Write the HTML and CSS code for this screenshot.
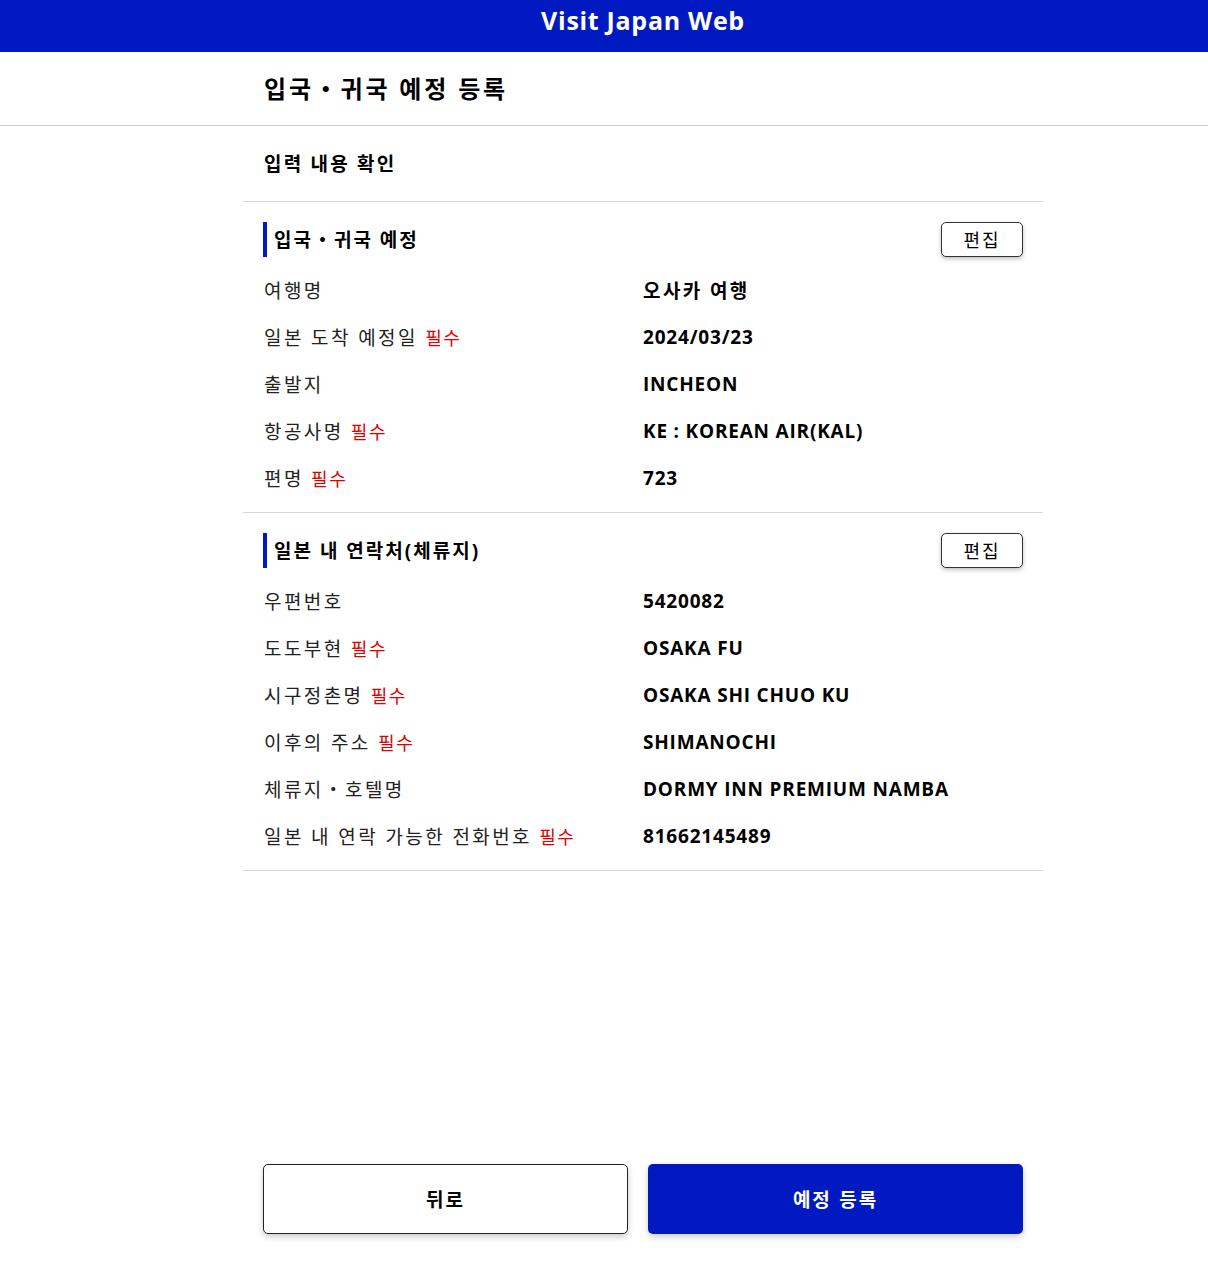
FILE: index.html
```html
<!DOCTYPE html>
<html lang="ko">
<head>
  <meta charset="UTF-8">
  <meta name="viewport" content="width=device-width, initial-scale=1.0">
  <title>입국・귀국 예정 등록 - Visit Japan Web</title>
  <link rel="stylesheet" href="styles.css">
</head>
<body>

  <!-- 상단 헤더 -->
  <header class="top-bar">
    <div class="wrap top-title">Visit Japan Web</div>
  </header>

  <div class="page-title-box">
    <h1 class="wrap page-title">입국・귀국 예정 등록</h1>
  </div>

  <main class="wrap">
    <h2 class="sub-title">입력 내용 확인</h2>

    <!-- 입국・귀국 예정 -->
    <section class="sec">
      <div class="sec-head">
        <h3 class="sec-title">입국・귀국 예정</h3>
        <button class="btn-edit">편집</button>
      </div>
      <div class="row"><span class="lbl">여행명</span><span class="val ko">오사카 여행</span></div>
      <div class="row"><span class="lbl">일본 도착 예정일 <em class="req">필수</em></span><span class="val">2024/03/23</span></div>
      <div class="row"><span class="lbl">출발지</span><span class="val">INCHEON</span></div>
      <div class="row"><span class="lbl">항공사명 <em class="req">필수</em></span><span class="val">KE : KOREAN AIR(KAL)</span></div>
      <div class="row"><span class="lbl">편명 <em class="req">필수</em></span><span class="val">723</span></div>
    </section>

    <!-- 일본 내 연락처 -->
    <section class="sec">
      <div class="sec-head">
        <h3 class="sec-title">일본 내 연락처(체류지)</h3>
        <button class="btn-edit">편집</button>
      </div>
      <div class="row"><span class="lbl">우편번호</span><span class="val">5420082</span></div>
      <div class="row"><span class="lbl">도도부현 <em class="req">필수</em></span><span class="val">OSAKA FU</span></div>
      <div class="row"><span class="lbl">시구정촌명 <em class="req">필수</em></span><span class="val">OSAKA SHI CHUO KU</span></div>
      <div class="row"><span class="lbl">이후의 주소 <em class="req">필수</em></span><span class="val">SHIMANOCHI</span></div>
      <div class="row"><span class="lbl">체류지・호텔명</span><span class="val">DORMY INN PREMIUM NAMBA</span></div>
      <div class="row"><span class="lbl">일본 내 연락 가능한 전화번호 <em class="req">필수</em></span><span class="val">81662145489</span></div>
    </section>
  </main>

  <footer class="wrap footer">
    <button class="btn btn-back">뒤로</button>
    <button class="btn btn-submit">예정 등록</button>
  </footer>

</body>
</html>
```

FILE: styles.css
```css
* {
  box-sizing: border-box;
}
body {
  margin: 0;
  min-height: 100vh;
  display: flex;
  flex-direction: column;
  font-family: "Open Sans", "Noto Sans CJK KR", sans-serif;
  color: #000;
  background: #fff;
}
.wrap {
  width: 800px;
  margin-left: 243px;
}
h1, h2, h3 {
  margin: 0;
}

.top-bar {
  background-color: #0019c1;
  height: 52px;
}
.top-title {
  color: #fff;
  text-align: center;
  font-family: "Open Sans", sans-serif;
  font-weight: 700;
  font-size: 25px;
  letter-spacing: 0.7px;
  line-height: 41px;
}

.page-title-box {
  border-bottom: 1px solid #cfcfcf;
}
.page-title {
  height: 73px;
  display: flex;
  align-items: center;
  padding: 0 0 2px 21px;
  font-size: 24px;
  font-weight: 700;
  letter-spacing: 2.8px;
}

.sub-title {
  height: 76px;
  display: flex;
  align-items: center;
  padding: 0 0 2px 21px;
  font-size: 19px;
  font-weight: 700;
  letter-spacing: 2.2px;
  border-bottom: 1px solid #d8d8d8;
}

.sec {
  padding: 20px 20px 10px 21px;
  border-bottom: 1px solid #d8d8d8;
}
.sec-head {
  display: flex;
  justify-content: space-between;
  align-items: center;
  height: 35px;
  margin-bottom: 10px;
}
.sec-title {
  height: 35px;
  display: flex;
  align-items: center;
  border-left: 4px solid #0019c1;
  margin-left: -1px;
  padding: 0 0 2px 7px;
  font-size: 19px;
  font-weight: 700;
  letter-spacing: 2px;
}
.btn-edit {
  width: 82px;
  height: 35px;
  padding-bottom: 2px;
  background: #fff;
  border: 1px solid #333;
  border-radius: 5px;
  box-shadow: 0 2px 4px rgba(0, 0, 0, 0.25);
  font-family: "Noto Sans CJK KR", sans-serif;
  font-size: 18px;
  letter-spacing: 2px;
  color: #000;
}

.row {
  display: grid;
  grid-template-columns: 379px 1fr;
  align-items: center;
  height: 47px;
  padding-bottom: 2px;
}
.lbl {
  font-size: 19px;
  letter-spacing: 2.4px;
  color: #222;
}
.req {
  font-style: normal;
  color: #e00000;
  font-size: 18px;
  letter-spacing: 1.5px;
}
.val {
  font-size: 19px;
  font-weight: 700;
  letter-spacing: 0.8px;
}
.val.ko {
  letter-spacing: 2.4px;
}

.footer {
  margin-top: auto;
  padding: 0 20px 33px 20px;
  display: grid;
  grid-template-columns: 365px 375px;
  gap: 20px;
}
.btn {
  height: 70px;
  padding-bottom: 2px;
  border-radius: 5px;
  font-family: "Noto Sans CJK KR", sans-serif;
  font-size: 19px;
  font-weight: 700;
  letter-spacing: 2px;
  box-shadow: 0 3px 6px rgba(0, 0, 0, 0.2);
}
.btn-back {
  background: #fff;
  border: 1px solid #222;
  color: #000;
}
.btn-submit {
  background: #0019c1;
  border: none;
  color: #fff;
}
```
